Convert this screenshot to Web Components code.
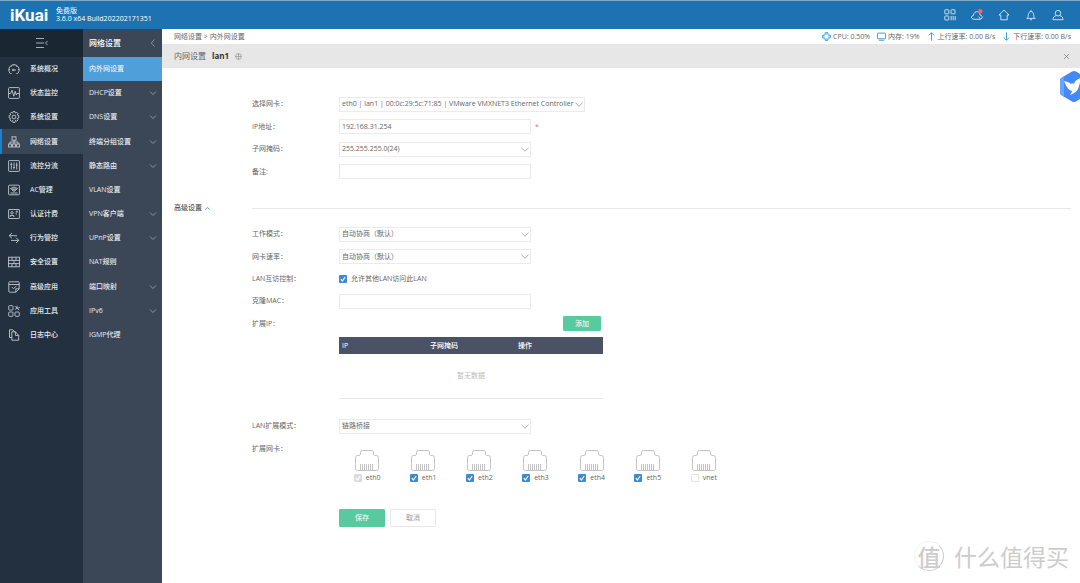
<!DOCTYPE html>
<html lang="zh-CN">
<head>
<meta charset="utf-8">
<meta name="viewport" content="width=device-width, initial-scale=1">
<title>iKuai - 内外网设置</title>
<style>
  html, body { height: 100%; margin: 0; }
  body { font: 7px/10px "Open Sans", "Noto Sans CJK SC", sans-serif; color: #666; background: #fff; }
</style>
</head>
<body>
<ik-app></ik-app>

<script>
const CHEVRON = c => `url("data:image/svg+xml,%3Csvg xmlns='http://www.w3.org/2000/svg' width='8' height='5' viewBox='0 0 8 5' fill='none' stroke='%23${c}' stroke-width='.8'%3E%3Cpath d='M.5 .8 4 4.200 7.500 .8'/%3E%3C/svg%3E")`;
const TICK = `url("data:image/svg+xml,%3Csvg xmlns='http://www.w3.org/2000/svg' width='8' height='8' viewBox='0 0 8 8' fill='none' stroke='white' stroke-width='1.1'%3E%3Cpath d='M1.8 4.2 3.4 6 6.2 2'/%3E%3C/svg%3E")`;

const CONTROL_CSS = `
  *, *::before { box-sizing: border-box; }
  input, select, button { font: inherit; color: inherit; margin: 0; outline: none; }
  input[type=text], select { width: 100%; height: 15px; padding: 0 3px; border: 1px solid #ebebeb; border-radius: 0; background: #fff; display: block; }
  select { appearance: none; padding-right: 0; background: #fff ${CHEVRON('999')} no-repeat right 1px center; }
  input[type=text], select { padding-left: 2px; }
  input[type=checkbox] { appearance: none; flex: none; width: 8px; height: 8px; border: 1px solid #e4e4e4; border-radius: 1px; background: #fff; }
  input[type=checkbox]:checked { border: 0; background: #3a8ad6 ${TICK} center; }
  input[type=checkbox]:checked:disabled { background-color: #dcdcdc; }
`;

const ICONS = {
  gauge: '<path d="M3.600 10.600H2.400A5.200 5.200 0 1 1 9.600 10.600H8.400M1 6.500h1M10 6.500h1M3 3l.7.7M9 3l-.7.7M6 1.500v1M5.500 7H8"/><circle cx="5.100" cy="7" r=".8"/>',
  pulse: '<rect x=".6" y=".6" width="10.800" height="10.800" rx=".8"/><path d="M.6 6.500h2L4 3.200l1.800 6 1.400-5L8.300 8 9 6.500h2.400"/>',
  gear: '<circle cx="6" cy="6" r="1.900"/><path d="M5 .6h2l.4 1.500 1.300-.8 1.300 1.400-.8 1.300 1.600.5v2.400l-1.600.6.800 1.300-1.300 1.400-1.300-.8-.4 2H5l-.4-1.900-1.300.8L2 8.900l.8-1.400-1.600-.6V4.500L2.800 4 2 2.700l1.300-1.400 1.300.8z"/>',
  tree: '<rect x="4" y=".8" width="4" height="3.400"/><rect x=".6" y="8" width="2.800" height="3"/><rect x="4.600" y="8" width="2.800" height="3"/><rect x="8.600" y="8" width="2.800" height="3"/><path d="M6 4.200V8M2 8V6h8v2"/>',
  sliders: '<rect x=".6" y=".6" width="10.800" height="10.800" rx=".6"/><path d="M3.300 2.500v7M6 2.500v7M8.700 2.500v7M2.400 4.500h1.800M5.100 7.500h1.800M7.800 5h1.800"/>',
  ac: '<rect x=".6" y="1.200" width="10.800" height="9.600" rx=".8"/><path d="M2.500 4.500Q6 1.700 9.500 4.500L6 7.500zM2.500 9h7M3.500 5h5M4.500 6h3" />',
  idcard: '<rect x=".6" y="1.500" width="10.800" height="9" rx=".5"/><circle cx="4" cy="4.800" r="1.200"/><path d="M2.200 9V7.500h3.600V9M7.500 4h2M7.500 6h1.500M8 3.300h2"/>',
  swap: '<path d="M4 .9 1.200 3.700H9M4 6.400 1.200 3.700M8 5.600l2.800 2.800H3M8 11.100l2.800-2.700"/>',
  wall: '<rect x=".6" y="1.200" width="10.800" height="9.600"/><path d="M.6 4.400h10.800M.6 7.600h10.800M4 1.200v3.200M8 1.200v3.200M6 4.400v3.200M4 7.600v3.200M8 7.600v3.200"/>',
  appcheck: '<path d="M.8 3.500h10.400M7.800 11.200H1.600q-.8 0-.8-.8V1.600q0-.8.8-.8h8.800q.8 0 .8.800v6.200zM7.800 11.200V7.800h3.400M3.800 6l1.600 1.700L8.400 5"/>',
  tools: '<rect x=".7" y=".7" width="4.300" height="4.300" rx=".8"/><rect x=".7" y="7" width="4.300" height="4.300" rx=".8"/><rect x="7" y="7" width="4.300" height="4.300" rx=".8"/><path d="M7 1.200l4 4M9.200.8l-.6 2 2 .5 1-1.300M7 4.800l2-2"/>',
  docs: '<path d="M3.800 8.500H1.500V.8h3.400l2 2M3.800 2.800h3.600l3.300 3.600v4.800H3.800zM7.400 2.800v3.600h3.300"/>',
  fold: '<path d="M0 1.500h8M0 6h8M0 10.500h8M11.500 4 9.500 6l2 2"/>',
  left: '<path d="M7.500 2.500 4.300 6l3.200 3.500"/>',
  down: '<path d="M3 4.500 6 7.500 9 4.500"/>',
  up: '<path d="M2 8 6 4.200 10 8"/>',
  plus: '<circle cx="6" cy="6" r="5"/><path d="M6 1v10M1 6h10"/>',
  close: '<path d="M2 2l8 8M10 2l-8 8"/>',
  grid: '<rect x=".8" y=".8" width="4" height="4" rx=".5"/><rect x="7" y=".8" width="4" height="4" rx=".5"/><rect x=".8" y="7" width="4" height="4" rx=".5"/><path d="M7.200 7v4.300M9.200 7v4.300M11.200 7v4.300"/>',
  cloud: '<path d="M9 10.300H3C-.2 10-.2 6.700 2.400 6.500 3 1.500 8.700 1.500 9 6c3 .3 3 4 0 4.300 0-1.400-.4-2.200-1.500-2.600"/><circle cx="9.300" cy="2.200" r="2.200" fill="#ff6068" stroke="none"/>',
  home: '<path d="M6 1 .9 6h1.900v4.800h6.400V6h1.900z"/>',
  bell: '<path d="M1.500 9.400h9M2.600 9.200C3.700 7.500 2.600 2.600 6 2.500c3.400.1 2.300 5 3.400 6.700M6 1v1.500M5 10.500q1 1 2 0"/>',
  user: '<circle cx="6" cy="4.200" r="2.800"/><path d="M4.300 6.700C2 7 1 8.500 1 10.700h10C11 8.500 10 7 7.700 6.700"/>',
  cpu: '<rect x="2.600" y="2.600" width="6.800" height="6.800" rx="1"/><path d="M4.500 2V.5h3V2M4.500 10v1.500h3V10M2 4.500H.5v3H2M10 4.500h1.500v3H10"/>',
  monitor: '<rect x=".7" y="1.500" width="10.600" height="7.500" rx=".6"/><path d="M2.500 11h7"/>',
  arrowup: '<path d="M6 11.500V1M2.500 4.500 6 1l3.500 3.500"/>',
  arrowdown: '<path d="M6 .5V11M2.500 7.500 6 11l3.500-3.500"/>'
};

class IkElement extends HTMLElement {
  connectedCallback() {
    if (this.shadowRoot) return;
    const root = this.attachShadow({ mode: 'open' });
    const t = document.createElement('template');
    t.innerHTML = this.render();
    root.append(t.content.cloneNode(true));
  }
  attr(name, fallback = '') { return this.getAttribute(name) ?? fallback; }
}

customElements.define('ik-icon', class extends IkElement {
  render() {
    return `<style>
      :host { display: block; flex: none; width: 12px; height: 12px; }
      svg { display: block; width: 100%; height: 100%; fill: none; stroke: currentColor; stroke-width: var(--stroke, .9); }
    </style><svg viewBox="0 0 12 12" aria-hidden="true">${ICONS[this.attr('name')]}</svg>`;
  }
});

customElements.define('ik-header', class extends IkElement {
  render() {
    const tools = [['grid', '二维码'], ['cloud', '云服务'], ['home', '首页'], ['bell', '通知'], ['user', '账户']];
    return `<style>
      :host { display: flex; align-items: center; box-sizing: border-box; height: 29px; padding: 0 16px 0 10px; border-top: 1px solid #82abcb; background: #1d73b2; color: #fff; }
      .logo { width: 40px; color: inherit; text-decoration: none; font: 700 17px/20px Roboto, sans-serif; margin-right: 6px; }
      .version { line-height: 8px; }
      nav { display: flex; gap: 15px; margin-left: auto; }
      button { padding: 0; border: 0; background: none; color: #dbe8f3; }
    </style>
    <a class="logo" href="#">iKuai</a>
    <div class="version">免费版<br>3.6.0 x64 Build202202171351</div>
    <nav>${tools.map(([i, l]) => `<button aria-label="${l}"><ik-icon name="${i}"></ik-icon></button>`).join('')}</nav>`;
  }
});

customElements.define('ik-menu-item', class extends IkElement {
  render() {
    return `<style>
      :host { display: block; }
      a { display: flex; align-items: center; box-sizing: border-box; height: 100%; padding: 0 3px 0 6px; color: #e8ecf0; text-decoration: none; font-weight: 500; border-left: 2px solid transparent; }
      a ik-icon { color: #c3cad1; }
      a .lead { margin-right: 10px; }
      a.plain { padding-left: 4px; }
      a .more { margin-left: auto; color: #929ba6; }
      :host([active]) a.icon { background: #394655; border-color: #1d7fd0; }
      :host([active]) a.plain { background: #4f9fdb; border-color: #4f9fdb; }
    </style>
    <a href="#" class="${this.hasAttribute('icon') ? 'icon' : 'plain'}">
      ${this.hasAttribute('icon') ? `<ik-icon class="lead" name="${this.attr('icon')}"></ik-icon>` : ''}
      <slot></slot>
      ${this.hasAttribute('more') ? '<ik-icon class="more" name="down"></ik-icon>' : ''}
    </a>`;
  }
});

customElements.define('ik-sidebar', class extends IkElement {
  render() {
    return `<style>
      :host { display: flex; flex-direction: column; flex: none; width: 83px; background: #223040; color: #b6bec6; }
      button { display: flex; align-items: center; justify-content: center; height: 28px; padding: 0; border: 0; background: #1b2633; color: inherit; }
      nav { display: grid; grid-auto-rows: 1fr; height: 290px; }
    </style>
    <button aria-label="收起菜单"><ik-icon name="fold"></ik-icon></button>
    <nav><slot></slot></nav>`;
  }
});

customElements.define('ik-submenu', class extends IkElement {
  render() {
    return `<style>
      :host { display: flex; flex-direction: column; flex: none; width: 79px; background: #3b4656; color: #fff; }
      header { display: flex; align-items: center; justify-content: space-between; height: 28px; padding: 0 3px 0 6px; font-size: 8px; font-weight: 500; }
      ik-icon { color: #929ba6; }
      nav { display: grid; grid-auto-rows: 1fr; height: 290px; }
    </style>
    <header>${this.attr('heading')}<ik-icon name="left"></ik-icon></header>
    <nav><slot></slot></nav>`;
  }
});

customElements.define('ik-status-bar', class extends IkElement {
  render() {
    return `<style>
      :host { display: flex; align-items: center; justify-content: space-between; height: 15px; padding: 0 9px 0 12px; }
      a { color: inherit; text-decoration: none; }
      .stats, .stats span { display: flex; align-items: center; }
      .stats { gap: 7px; } .stats span { gap: 2px; }
      ik-icon { width: 9px; height: 9px; color: #3ba2dd; --stroke: 1.3; }
    </style>
    <div><a href="#">网络设置</a> &gt; <a href="#">内外网设置</a></div>
    <div class="stats">
      <span><ik-icon name="cpu"></ik-icon>CPU: 0.50%</span>
      <span><ik-icon name="monitor"></ik-icon>内存: 19%</span>
      <span><ik-icon name="arrowup"></ik-icon>上行速率: 0.00 B/s</span>
      <span><ik-icon name="arrowdown"></ik-icon>下行速率: 0.00 B/s</span>
    </div>`;
  }
});

customElements.define('ik-title-bar', class extends IkElement {
  render() {
    return `<style>
      :host { display: flex; align-items: center; height: 24px; padding: 0 10px 0 12px; background: #e7e7e7; font-size: 8px; }
      b { color: #333; margin: 0 6px; font-weight: 700; }
      button { padding: 0; border: 0; background: none; margin-left: auto; }
      ik-icon { width: 7px; height: 7px; color: #999; --stroke: 1.3; }
      button ik-icon { color: #777; }
    </style>
    内网设置<b>lan1</b><ik-icon name="plus"></ik-icon>
    <button aria-label="关闭"><ik-icon name="close"></ik-icon></button>`;
  }
});

/* A labelled form line. With no type it shows its slotted content beside the label. */
customElements.define('ik-field', class extends IkElement {
  render() {
    const type = this.attr('type'), v = this.attr('value');
    const control = {
      text: `<input id="c" type="text" value="${v}">`,
      select: `<select id="c"><option>${v}</option></select>`,
      check: `<label class="check"><input id="c" type="checkbox" checked>${v}</label>`
    }[type] || '<slot></slot>';
    return `<style>${CONTROL_CSS}
      :host { display: grid; grid-template-columns: 87px minmax(0, 1fr); align-items: center; }
      .control { display: flex; align-items: center; gap: 4px; }
      .control > input[type=text], .control > select { width: 192px; }
      :host([wide]) .control > select { width: 246px; }
      .check { display: flex; align-items: center; gap: 4px; }
      em { color: #f56c6c; font-style: normal; }
    </style>
    ${type ? `<label for="c">${this.attr('label')}</label>` : `<span>${this.attr('label')}</span>`}
    <div class="control">${control}${this.hasAttribute('required') ? '<em>*</em>' : ''}</div>`;
  }
});

customElements.define('ik-button', class extends IkElement {
  render() {
    return `<style>
      :host { display: inline-flex; width: 46px; height: 18px; }
      :host([small]) { width: 38px; height: 15px; }
      button { flex: 1; padding: 0; font: inherit; border: 1px solid #e8e8e8; border-radius: 1px; background: #fff; color: #999; }
      :host([primary]) button { background: #57cb9f; border-color: #57cb9f; color: #fff; }
    </style><button type="button"><slot></slot></button>`;
  }
});

customElements.define('ik-ip-table', class extends IkElement {
  render() {
    return `<style>
      :host { display: block; width: 264px; }
      table { width: 100%; border-collapse: collapse; table-layout: fixed; border-bottom: 1px solid #e8e8e8; }
      th { height: 17px; padding: 0 0 0 3px; background: #4b5266; color: #fff; text-align: left; font-weight: 500; }
      td { height: 44px; padding: 0; text-align: center; color: #bbb; }
    </style>
    <table><thead><tr><th>IP</th><th>子网掩码</th><th>操作</th></tr></thead>
    <tbody><tr><td colspan="3">暂无数据</td></tr></tbody></table>`;
  }
});

customElements.define('ik-port', class extends IkElement {
  render() {
    return `<style>${CONTROL_CSS}
      :host { display: block; }
      label { display: flex; flex-direction: column; align-items: center; gap: 2px; }
      svg { width: 24px; height: 21px; fill: none; stroke: #c4c4c4; stroke-width: 1; }
      span { display: flex; align-items: center; gap: 4px; }
    </style>
    <label>
      <svg viewBox="0 0 24 21" aria-hidden="true"><path d="M2.500 20.500Q.5 20.500.5 18.500V7.500Q.5 5.500 2.500 5.500H4.500V5Q4.500 4.500 5.500 4.500V2.500Q5.500.5 7.500.5h9Q18.500.5 18.500 2.500v2q1 0 1 1H21.500Q23.500 5.500 23.500 7.500v11q0 2-2 2zM5.500 20v-6M7.500 20v-6M9.500 20v-6M11.500 20v-6M13.500 20v-6M15.500 20v-6M17.500 20v-6"/></svg>
      <span><input type="checkbox" ${this.hasAttribute('on') ? 'checked' : ''} ${this.hasAttribute('locked') ? 'disabled' : ''}><slot></slot></span>
    </label>`;
  }
});

customElements.define('ik-lan-form', class extends IkElement {
  render() {
    return `<style>
      :host { display: block; padding: 25px 9px 0 12px; }
      .rows { display: grid; grid-auto-rows: 1fr; height: 90px; padding-left: 78px; }
      .rows.five { height: 112px; }
      .rows.two { height: 45px; margin-top: 16px; }
      .advanced { display: grid; grid-template-columns: 78px 1fr; align-items: center; height: 10px; margin: 20px 0 10px; }
      .advanced button { display: flex; align-items: center; gap: 2px; padding: 0; border: 0; background: none; font: inherit; font-weight: 500; color: #555; }
      .advanced ik-icon { width: 7px; height: 7px; color: #3a8ad6; --stroke: 1.4; }
      hr { width: 100%; margin: 0; border: 0; border-top: 1px solid #e8e8e8; }
      .add { margin-left: 224px; }
      .table, .ports, .actions { margin-left: 165px; }
      .table { margin-top: 2px; }
      .ports { display: grid; grid-template-columns: repeat(7, 1fr); max-width: 393px; margin-top: -10px; }
      .actions { display: flex; gap: 5px; margin-top: 26px; }
    </style>
    <form>
      <div class="rows">
        <ik-field label="选择网卡：" type="select" wide value="eth0 | lan1 | 00:0c:29:5c:71:85 | VMware VMXNET3 Ethernet Controller"></ik-field>
        <ik-field label="IP地址：" type="text" value="192.168.31.254" required></ik-field>
        <ik-field label="子网掩码：" type="select" value="255.255.255.0(24)"></ik-field>
        <ik-field label="备注:" type="text"></ik-field>
      </div>
      <div class="advanced"><button type="button">高级设置<ik-icon name="up"></ik-icon></button><hr></div>
      <div class="rows five">
        <ik-field label="工作模式：" type="select" value="自动协商（默认）"></ik-field>
        <ik-field label="网卡速率：" type="select" value="自动协商（默认）"></ik-field>
        <ik-field label="LAN互访控制：" type="check" value="允许其他LAN访问此LAN"></ik-field>
        <ik-field label="克隆MAC：" type="text"></ik-field>
        <ik-field label="扩展IP："><ik-button class="add" primary small>添加</ik-button></ik-field>
      </div>
      <ik-ip-table class="table"></ik-ip-table>
      <div class="rows two">
        <ik-field label="LAN扩展模式：" type="select" value="链路桥接"></ik-field>
        <ik-field label="扩展网卡："></ik-field>
      </div>
      <div class="ports">
        <ik-port on locked>eth0</ik-port><ik-port on>eth1</ik-port><ik-port on>eth2</ik-port><ik-port on>eth3</ik-port><ik-port on>eth4</ik-port><ik-port on>eth5</ik-port><ik-port>vnet</ik-port>
      </div>
      <div class="actions"><ik-button primary>保存</ik-button><ik-button>取消</ik-button></div>
    </form>`;
  }
});

customElements.define('ik-assistant', class extends IkElement {
  render() {
    return `<style>
      :host { position: absolute; top: 70px; right: 0; width: 21px; height: 33px; overflow: hidden; }
      button { padding: 0; border: 0; background: none; }
      svg { display: block; }
    </style>
    <button aria-label="助手"><svg width="30" height="33" viewBox="0 0 30 33">
      <path d="M13 1.500q2-1 4 0l10 6q2 1 2 3v12q0 2-2 3l-10 6q-2 1-4 0l-10-6q-2-1-2-3v-12q0-2 2-3z" fill="#4389f7"/>
      <path d="M1 22.500v-12q0-2 2-3L5 6.300v20.400l-2-1.200q-2-1-2-3z" fill="#6aa5fb"/>
      <path d="M5 11c3 1 5 1 7 3 1-1 2-1 3 0 1-3 3-5 7-6-1 3-1 5-2 8-1 5-4 7-9 9 1-2 2-3 2-4-4-1-6-5-8-10z" fill="#fff"/>
    </svg></button>`;
  }
});

customElements.define('ik-watermark', class extends IkElement {
  render() {
    return `<style>
      :host { position: absolute; right: 11px; bottom: 11px; display: flex; align-items: center; gap: 10px; color: #ccc; font: 23px/32px "Noto Sans CJK SC", sans-serif; pointer-events: none; }
      .seal { box-sizing: border-box; display: flex; align-items: center; justify-content: center; width: 30px; height: 30px; border: 1px solid #ccc; border-color: #f2f2f2 #ccc #ccc #f2f2f2; border-radius: 50%; font-weight: 500; }
    </style><span class="seal">值</span><span>什么值得买</span>`;
  }
});

customElements.define('ik-app', class extends IkElement {
  render() {
    const main = [['gauge', '系统概况'], ['pulse', '状态监控'], ['gear', '系统设置'], ['tree', '网络设置'], ['sliders', '流控分流'], ['ac', 'AC管理'], ['idcard', '认证计费'], ['swap', '行为管控'], ['wall', '安全设置'], ['appcheck', '高级应用'], ['tools', '应用工具'], ['docs', '日志中心']];
    const sub = [['内外网设置'], ['DHCP设置', 1], ['DNS设置', 1], ['终端分组设置', 1], ['静态路由', 1], ['VLAN设置'], ['VPN客户端', 1], ['UPnP设置', 1], ['NAT规则'], ['端口映射', 1], ['IPv6', 1], ['IGMP代理']];
    return `<style>
      :host { position: relative; display: flex; flex-direction: column; min-height: 100%; }
      .body { display: flex; flex: 1; }
      main { flex: 1; min-width: 0; }
    </style>
    <ik-header></ik-header>
    <div class="body">
      <ik-sidebar>${main.map(([i, t], n) => `<ik-menu-item icon="${i}" ${n === 3 ? 'active' : ''}>${t}</ik-menu-item>`).join('')}</ik-sidebar>
      <ik-submenu heading="网络设置">${sub.map(([t, m], n) => `<ik-menu-item ${m ? 'more' : ''} ${n === 0 ? 'active' : ''}>${t}</ik-menu-item>`).join('')}</ik-submenu>
      <main>
        <ik-status-bar></ik-status-bar>
        <ik-title-bar></ik-title-bar>
        <ik-lan-form></ik-lan-form>
      </main>
    </div>
    <ik-assistant></ik-assistant>
    <ik-watermark></ik-watermark>`;
  }
});
</script>
</body>
</html>
